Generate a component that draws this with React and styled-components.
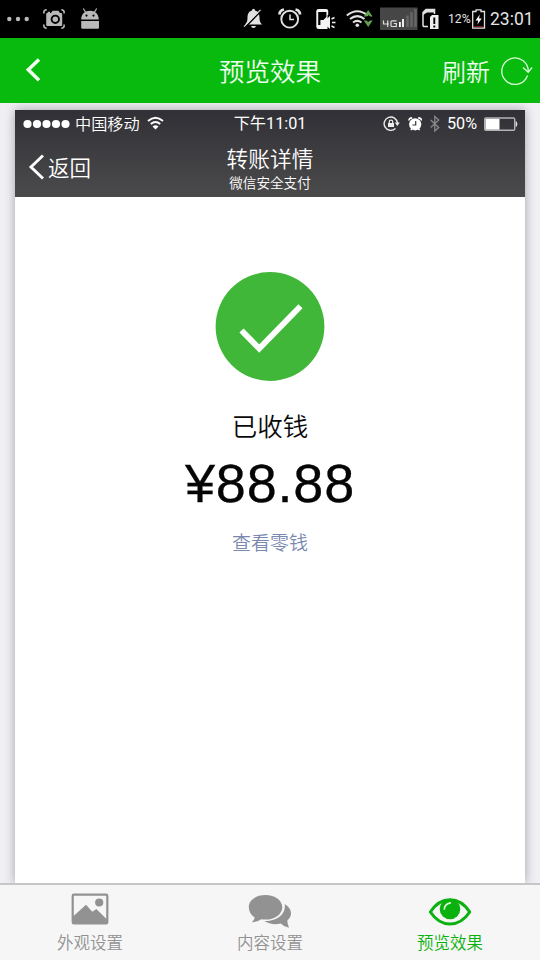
import React from 'react';
import styled, { createGlobalStyle } from 'styled-components';

const GlobalStyle = createGlobalStyle`
    body {
        margin: 0;
        background: #efeff4;
        font-family: Roboto, 'Noto Sans CJK SC', sans-serif;
    }
`;

const Page = styled('div')`
    display: flex;
    flex-direction: column;
    width: 540px;
    height: 960px;
    overflow: hidden;
    background: #efeff4;
`;

const SystemBar = styled('div')`
    display: flex;
    flex: none;
    height: 38px;
    padding-left: 7px;
    background: #000;
    color: #e4e4e4;
`;

const Glyph = styled('svg')`
    display: block;
    flex: none;
    margin-left: ${props => props.$gap || 0}px;
`;

const Spacer = styled('div')`
    flex: 1;
`;

const BatteryLevel = styled('span')`
    width: 23px;
    margin-left: 8px;
    font-size: 12.2px;
    line-height: 39px;
    white-space: nowrap;
`;

const Clock = styled('span')`
    width: 50px;
    margin-left: 4px;
    font-size: 17.5px;
    line-height: 39px;
    white-space: nowrap;
`;

const AppHeader = styled('header')`
    display: grid;
    grid-template-columns: 1fr auto 1fr;
    align-items: center;
    flex: none;
    height: 65px;
    background: #07ba0d;
    color: #effff0;
    font-family: 'Noto Sans CJK SC', sans-serif;
    font-weight: 350;
`;

const HeaderTitle = styled('h1')`
    margin: 0;
    font-size: 25.5px;
    font-weight: 350;
    line-height: 62px;
    padding-bottom: 2px;
`;

const RefreshButton = styled('div')`
    display: flex;
    justify-content: flex-end;
    align-items: center;
    padding-right: 7px;
    font-size: 24px;
    line-height: 64px;
`;

const PreviewArea = styled('main')`
    flex: 1;
    display: flex;
    min-height: 0;
    padding: 7px 15px 0;
    overflow: hidden;
`;

const Phone = styled('section')`
    flex: 1;
    display: flex;
    flex-direction: column;
    background: #fff;
    box-shadow: 0 0 10px rgba(0, 0, 0, 0.32);
`;

const PhoneTop = styled('div')`
    flex: none;
    height: 87px;
    background: linear-gradient(#313036, #4b4a4b);
    color: #fff;
`;

const PhoneStatus = styled('div')`
    display: grid;
    grid-template-columns: 1fr auto 1fr;
    height: 27px;
    font-size: 16.2px;
    line-height: 27px;
`;

const StatusGroup = styled('div')`
    display: flex;
    justify-content: ${props => (props.$end ? 'flex-end' : 'flex-start')};
    padding: ${props => (props.$end ? '0 7px 0 0' : '0 0 0 8px')};
`;

const Carrier = styled('span')`
    margin-left: 5px;
    font-family: 'Noto Sans CJK SC', sans-serif;
    font-weight: 350;
    line-height: 26px;
`;

const StatusTime = styled('span')`
    line-height: 28px;
`;

const Percent = styled('span')`
    margin-left: 7px;
`;

const PhoneNav = styled('div')`
    display: grid;
    grid-template-columns: 1fr auto 1fr;
    height: 60px;
    font-weight: 350;
`;

const BackLink = styled('div')`
    display: flex;
    padding-left: 13px;
    font-family: 'Noto Sans CJK SC', sans-serif;
    font-size: 21.5px;
    line-height: 59px;
`;

const NavTitles = styled('div')`
    display: flex;
    flex-direction: column;
    align-items: center;
    padding-top: 8px;
`;

const NavTitle = styled('div')`
    font-size: 21.7px;
    line-height: 29px;
`;

const NavSubtitle = styled('div')`
    font-size: 13.6px;
    line-height: 19px;
`;

const Receipt = styled('div')`
    display: flex;
    flex-direction: column;
    align-items: center;
    padding-top: 74px;
    font-family: 'Noto Sans CJK SC', sans-serif;
    font-weight: 350;
`;

const ReceiptStatus = styled('div')`
    margin-top: 25px;
    color: #0a0a0a;
    font-size: 25.5px;
    line-height: 35px;
`;

const Amount = styled('div')`
    margin-top: 11px;
    color: #050505;
    font-family: 'Liberation Sans', Arial, sans-serif;
    font-size: 54px;
    font-weight: 400;
    letter-spacing: 0.8px;
    line-height: 60px;
    -webkit-text-stroke: 0.3px #050505;
`;

const BalanceLink = styled('div')`
    margin-top: 15px;
    color: #7a88b0;
    font-size: 19px;
    line-height: 28px;
`;

const TabBar = styled('nav')`
    display: grid;
    grid-template-columns: repeat(3, 1fr);
    flex: none;
    box-sizing: border-box;
    height: 77px;
    border-top: 2px solid #c6c6c8;
    background: #f6f6f6;
    font-family: 'Noto Sans CJK SC', sans-serif;
`;

const TabItem = styled('div')`
    display: flex;
    flex-direction: column;
    align-items: center;
    color: ${props => (props.$active ? '#0bb20f' : '#929292')};
`;

const TabLabel = styled('span')`
    font-size: 16.5px;
    font-weight: 350;
    line-height: 24px;
    margin-top: 1px;
`;

/* Android status bar */

const MoreDots = () => (
    <Glyph width="23" height="38" viewBox="7 0 23 38" fill="#b9b9b9">
        <circle cx="9.3" cy="19" r="2.2" />
        <circle cx="18" cy="19" r="2.2" />
        <circle cx="26.7" cy="19" r="2.2" />
    </Glyph>
);

const ScreenshotIcon = () => (
    <Glyph $gap={13} width="22" height="38" viewBox="43 0 22 38">
        <path d="M43.900 13.500v-1.500q0-2 2.800-2.200M61.300 9.800q2.800.2 2.800 2.200v1.500M43.900 24.500V26q0 2 2.800 2.200M61.300 28.200q2.800-.2 2.800-2.200v-1.500" fill="none" stroke="#b9b9b9" strokeWidth="1.600" />
        <path d="M46.200 14q0-1 1-1h.5v-1.200h2.300V13h1l1.500-2.200h6L60 13h1q1.200 0 1.200 1v11q0 1-1 1H47.200q-1 0-1-1z" fill="#b9b9b9" />
        <circle cx="55.300" cy="19.300" r="3.700" fill="#b9b9b9" stroke="#000" strokeWidth="1.900" />
    </Glyph>
);

const AndroidIcon = () => (
    <Glyph $gap={15} width="20" height="38" viewBox="80 0 20 38">
        <path d="M81.200 19.500C81.200 14 85 10.800 90 10.800s8.800 3.200 8.800 8.700zM81.200 21h17.800v6.500q0 1.200-1.200 1.200H82.400q-1.200 0-1.200-1.200z" fill="#b9b9b9" />
        <path d="M83.300 8.500l2.500 4M96.700 8.500l-2.500 4" stroke="#b9b9b9" strokeWidth="1.200" />
        <circle cx="86.500" cy="15.600" r="1.100" />
        <circle cx="93.500" cy="15.600" r="1.100" />
    </Glyph>
);

const BellOffIcon = () => (
    <Glyph width="20" height="38" viewBox="243 0 20 38">
        <path d="M252 10.500q0-1.800 1.500-1.800t1.500 1.800c3.500 1 4.500 4 4.500 7 0 3.500.5 5 2.500 7H245c2-2 2.500-3.500 2.500-7 0-3 1-6 4.500-7zM251 26h5q-.5 2-2.500 2t-2.500-2z" fill="#e2e2e2" />
        <path d="M245 27.500L261 11" stroke="#000" strokeWidth="1.500" />
        <path d="M244 26.700L260.500 9.800" stroke="#e2e2e2" strokeWidth="1.200" />
    </Glyph>
);

const AlarmIcon = () => (
    <Glyph $gap={15} width="24" height="38" viewBox="278 0 24 38" fill="none" stroke="#e2e2e2">
        <circle cx="289.700" cy="19.200" r="8.400" strokeWidth="1.900" />
        <path d="M290 14.500v5h4" strokeWidth="1.500" />
        <path d="M279.500 14.500q0-4 4.500-5M300 14.500q0-4-4.500-5" strokeWidth="2.800" />
    </Glyph>
);

const PhoneSoundIcon = () => (
    <Glyph $gap={14} width="20" height="38" viewBox="316 0 20 38">
        <path d="M318.500 9h7.500q2.200 0 2.200 2.200V28q0 1-1 1H318.500q-2.200 0-2.200-2.200V11.200q0-2.200 2.200-2.200z" fill="#f4f4f4" />
        <path d="M318.200 12h8.200v5l-3 3h-3v5h-2.200z" fill="#000" />
        <path d="M328.300 15v14" stroke="#000" strokeWidth="1.500" />
        <path d="M321.500 20.500h3.500l5-4.500v13l-5-4.500h-3.500z" fill="#f4f4f4" />
        <path d="M331.500 19l3-1.500M332 22.500h3.500M331.500 26l3 1.500" stroke="#f4f4f4" strokeWidth="1.400" />
    </Glyph>
);

const WifiDataIcon = () => (
    <Glyph $gap={10} width="28" height="38" viewBox="346 0 28 38" fill="none">
        <path d="M346.800 15.500q10.500-8.500 21 0M350 19q7.300-5.800 14.500 0M353 22.500q4.200-3.200 8.500 0" stroke="#e2e2e2" strokeWidth="2" />
        <circle cx="357.300" cy="25.300" r="1.800" fill="#e2e2e2" />
        <path d="M363.800 16.500l4.400-6.500 4.400 6.500h-2.600l-1.800-1.500-1.800 1.500zM363.800 20.500l4.400 6.500 4.400-6.500h-2.600l-1.800 1.500-1.800-1.500z" fill="#64a150" />
    </Glyph>
);

const SignalBox = () => (
    <Glyph $gap={6} width="38" height="38" viewBox="380 0 38 38">
        <rect x="380" y="7.500" width="37.500" height="22.500" fill="#464646" />
        <path d="M399.900 22v5M403 19V27" stroke="#fff" strokeWidth="1.800" />
        <path d="M407.500 15.500V27M411.500 12V27M415.500 9V27" stroke="#666" strokeWidth="2.500" />
        <path d="M383.500 20.500v3.500h5.500M387.700 20.500V27M396.500 20.800h-4.500q-1 0-1 1v3.700q0 1 1 1h4.300v-3h-2.500" fill="none" stroke="#ddd" strokeWidth="1.200" />
    </Glyph>
);

const SimAlertIcon = () => (
    <Glyph $gap={4} width="18" height="38" viewBox="422 0 18 38">
        <path d="M423 26.500V12.500l3-3h8.500v4.500M423 26.500h5" fill="none" stroke="#e2e2e2" strokeWidth="1.500" />
        <path d="M423 15v-2.500l3-3h8.500v3H427z" fill="#e2e2e2" />
        <path d="M430 17l2-2h6.500v14H430z" fill="#eee" />
        <path d="M434.300 17.500V24M434.300 25.500v2" stroke="#000" strokeWidth="1.900" />
    </Glyph>
);

const ChargingIcon = () => (
    <Glyph $gap={1} width="14" height="38" viewBox="472 0 14 38">
        <path d="M472.700 11.500H476V9.800h5v1.700h3.500v16.700h-11.800z" fill="none" stroke="#e2e2e2" strokeWidth="1.300" />
        <path d="M473.500 26.500h10.500" stroke="#7a1c18" />
        <path d="M479.800 14.500l-4.300 6h2.700l-.8 4 4.300-6H479z" fill="#fff" />
    </Glyph>
);

/* App header */

const BackChevron = () => (
    <Glyph $gap={24} width="20" height="26" viewBox="0 1 20 26">
        <path d="M15 2.500L4.300 12.700l10.700 10.500" fill="none" stroke="#f0fff0" strokeWidth="3.500" />
    </Glyph>
);

const RefreshIcon = () => (
    <Glyph $gap={9} width="34" height="32" viewBox="499 55 34 32" fill="none" stroke="#d8ffd9" strokeWidth="1.300">
        <path d="M527.500 75.500A13.200 13.200 0 1 1 528.200 72" />
        <path d="M523 67.500l5.200 4.700 3.900-4.700" />
    </Glyph>
);

/* Inner phone status bar */

const SignalDots = () => (
    <Glyph width="47" height="27" viewBox="23 110 47 27" fill="#fff">
        {[27.5, 37, 46.5, 56, 65.5].map(cx => (
            <circle key={cx} cx={cx} cy="124" r="4.100" />
        ))}
    </Glyph>
);

const WifiIcon = () => (
    <Glyph $gap={7} width="18" height="27" viewBox="147 110 18 27" fill="none" stroke="#fff" strokeWidth="2">
        <path d="M148 121q7.500-6.500 15 0M150.800 124q4.700-4 9.400 0" />
        <path d="M152.500 126.500q3-2.300 6 0l-3 3z" fill="#fff" stroke="none" />
    </Glyph>
);

const RotationLockIcon = () => (
    <Glyph width="17" height="27" viewBox="383 110 17 27" fill="none" stroke="#eee">
        <path d="M395.500 128.500A6.700 6.700 0 1 1 397.500 123" strokeWidth="1.400" />
        <path d="M394.800 122.500h5l-2.500 3.500z" fill="#eee" stroke="none" />
        <path d="M388 123h6v4h-6z" fill="#eee" stroke="none" />
        <path d="M389.300 123v-1.200q0-1.600 1.700-1.600t1.700 1.600v1.200" strokeWidth="1.200" />
    </Glyph>
);

const SmallAlarmIcon = () => (
    <Glyph $gap={8} width="15" height="27" viewBox="408 110 15 27">
        <circle cx="415.200" cy="124.300" r="6.100" fill="#fff" />
        <path d="M409.200 120.500q-.5-2.500 3-2.600M421.200 120.500q.5-2.500-3-2.600M410.800 130l1.500-1.500M419.600 130l-1.500-1.500" fill="none" stroke="#fff" strokeWidth="1.700" />
        <path d="M415.700 121v4h-3.200" fill="none" stroke="#38373c" strokeWidth="1.200" />
    </Glyph>
);

const BluetoothIcon = () => (
    <Glyph $gap={7} width="10" height="27" viewBox="430 110 10 27">
        <path d="M430.700 120l8 7.500-3.900 3.500v-14.500l3.900 3.500-8 7.500" fill="none" stroke="#89898c" strokeWidth="1.300" />
    </Glyph>
);

const HalfBattery = () => (
    <Glyph $gap={7} width="34" height="27" viewBox="484 110 34 27">
        <rect x="484.700" y="118" width="30" height="12.300" rx="1.200" fill="none" stroke="#b4b4b6" strokeWidth="1.400" />
        <rect x="485.500" y="118.800" width="14" height="10.800" fill="#fff" />
        <path d="M516 121.500q2.300 2.600 0 5.200z" fill="#e2e2e2" stroke="#e2e2e2" strokeWidth=".6" />
    </Glyph>
);

const NavChevron = () => (
    <Glyph width="20" height="58" viewBox="28 138 20 58">
        <path d="M43 156.500L31 168 43 179.500" fill="none" stroke="#fff" strokeWidth="2.900" />
    </Glyph>
);

const SuccessIcon = () => (
    <Glyph width="112" height="111" viewBox="214 271 112 111">
        <circle cx="270" cy="326.500" r="54.400" fill="#40b738" />
        <path d="M241.500 330.500L259.200 348.500 300.500 306.300" fill="none" stroke="#fff" strokeWidth="5.800" />
    </Glyph>
);

/* Tab bar */

const PictureIcon = () => (
    <Glyph width="60" height="44" viewBox="60 885 60 44">
        <rect x="72.700" y="894.700" width="34.600" height="28.800" rx="1.200" fill="none" stroke="#929292" strokeWidth="2.200" />
        <circle cx="99.200" cy="902.500" r="4.100" fill="#929292" />
        <path d="M72.500 917L86 904.800l6.300 7 4-2.800L107.500 920v3.500h-35z" fill="#929292" />
    </Glyph>
);

const ChatIcon = () => (
    <Glyph width="60" height="44" viewBox="240 885 60 44">
        <path d="M284.700 904c4 2.500 6.300 5.500 6.300 9.300 0 3-1.500 5.500-3.700 7.200q.2 4 1.700 7.200-5-.7-8.300-4.200c-6 1.500-12 .3-16.300-2.500 12.500.5 22-7 20.300-17z" fill="#929292" />
        <path d="M265.500 895c9.500 0 16.800 5.300 16.800 12.200s-7.300 12.400-16.800 12.400q-2.200 0-4.200-.4-3.500 2.800-9.500 3 2.500-2 2.900-4.800c-3.700-2.300-5.900-5.900-5.900-10.200 0-6.900 7.200-12.200 16.700-12.200z" fill="#929292" />
    </Glyph>
);

const EyeIcon = () => (
    <Glyph width="60" height="44" viewBox="420 885 60 44">
        <path d="M430.400 912q7.800-12.300 19.600-12.300t19.700 12.300q-8 12-19.700 12T430.400 912z" fill="#f6f6f6" stroke="#0bb20f" strokeWidth="3.100" strokeLinejoin="round" />
        <circle cx="450" cy="909" r="10.300" fill="#0bb20f" />
        <path d="M444.300 909q.2-5 6-6.200" fill="none" stroke="#d9f4da" strokeWidth="1.700" strokeLinecap="round" />
    </Glyph>
);

const tabs = [
    { label: '外观设置', icon: PictureIcon },
    { label: '内容设置', icon: ChatIcon },
    { label: '预览效果', icon: EyeIcon, active: true },
];

class App extends React.Component {

    render() {
        return (
            <Page>
                <GlobalStyle />
                <SystemBar>
                    <MoreDots />
                    <ScreenshotIcon />
                    <AndroidIcon />
                    <Spacer />
                    <BellOffIcon />
                    <AlarmIcon />
                    <PhoneSoundIcon />
                    <WifiDataIcon />
                    <SignalBox />
                    <SimAlertIcon />
                    <BatteryLevel>12%</BatteryLevel>
                    <ChargingIcon />
                    <Clock>23:01</Clock>
                </SystemBar>
                <AppHeader>
                    <BackChevron />
                    <HeaderTitle>预览效果</HeaderTitle>
                    <RefreshButton>
                        刷新
                        <RefreshIcon />
                    </RefreshButton>
                </AppHeader>
                <PreviewArea>
                    <Phone>
                        <PhoneTop>
                            <PhoneStatus>
                                <StatusGroup>
                                    <SignalDots />
                                    <Carrier>中国移动</Carrier>
                                    <WifiIcon />
                                </StatusGroup>
                                <StatusTime>下午11:01</StatusTime>
                                <StatusGroup $end>
                                    <RotationLockIcon />
                                    <SmallAlarmIcon />
                                    <BluetoothIcon />
                                    <Percent>50%</Percent>
                                    <HalfBattery />
                                </StatusGroup>
                            </PhoneStatus>
                            <PhoneNav>
                                <BackLink>
                                    <NavChevron />
                                    返回
                                </BackLink>
                                <NavTitles>
                                    <NavTitle>转账详情</NavTitle>
                                    <NavSubtitle>微信安全支付</NavSubtitle>
                                </NavTitles>
                            </PhoneNav>
                        </PhoneTop>
                        <Receipt>
                            <SuccessIcon />
                            <ReceiptStatus>已收钱</ReceiptStatus>
                            <Amount>¥88.88</Amount>
                            <BalanceLink>查看零钱</BalanceLink>
                        </Receipt>
                    </Phone>
                </PreviewArea>
                <TabBar>
                    {tabs.map(({ label, icon: Icon, active }) => (
                        <TabItem key={label} $active={active}>
                            <Icon />
                            <TabLabel>{label}</TabLabel>
                        </TabItem>
                    ))}
                </TabBar>
            </Page>
        );
    }
}

export default App;
